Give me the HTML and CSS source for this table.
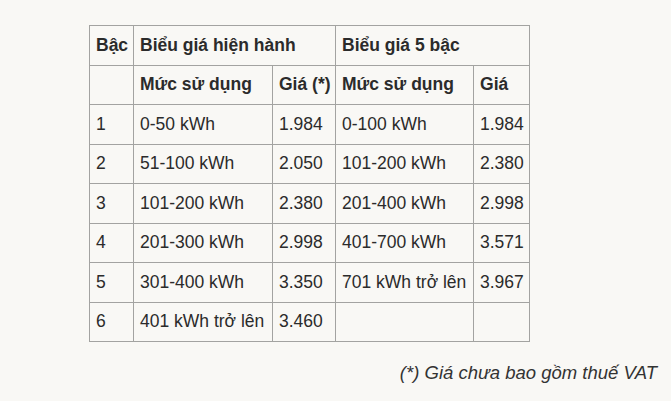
FILE: index.html
```html
<!DOCTYPE html>
<html lang="vi">
<head>
<meta charset="utf-8">
<link rel="stylesheet" href="styles.css">
</head>
<body>
<div class="page">
  <table class="price">
    <colgroup>
      <col class="c1"><col class="c2"><col class="c3"><col class="c4"><col class="c5">
    </colgroup>
    <tr class="head">
      <th>Bậc</th>
      <th colspan="2">Biểu giá hiện hành</th>
      <th colspan="2">Biểu giá 5 bậc</th>
    </tr>
    <tr class="head">
      <th></th>
      <th>Mức sử dụng</th>
      <th>Giá (*)</th>
      <th>Mức sử dụng</th>
      <th>Giá</th>
    </tr>
    <tr><td>1</td><td>0-50 kWh</td><td>1.984</td><td>0-100 kWh</td><td>1.984</td></tr>
    <tr><td>2</td><td>51-100 kWh</td><td>2.050</td><td>101-200 kWh</td><td>2.380</td></tr>
    <tr><td>3</td><td>101-200 kWh</td><td>2.380</td><td>201-400 kWh</td><td>2.998</td></tr>
    <tr><td>4</td><td>201-300 kWh</td><td>2.998</td><td>401-700 kWh</td><td>3.571</td></tr>
    <tr><td>5</td><td>301-400 kWh</td><td>3.350</td><td>701 kWh trở lên</td><td>3.967</td></tr>
    <tr><td>6</td><td>401 kWh trở lên</td><td>3.460</td><td></td><td></td></tr>
  </table>
  <p class="note">(*) Giá chưa bao gồm thuế VAT</p>
</div>
</body>
</html>
```
FILE: styles.css
```css
html, body {
  margin: 0;
  padding: 0;
  background: #f9f8f5;
}
body {
  width: 671px;
  height: 401px;
  overflow: hidden;
  font-family: "Liberation Sans", Arial, sans-serif;
  color: #2b2b2b;
}
.page {
  padding-top: 25px;
}
.price {
  margin-left: 89px;
  border-collapse: collapse;
  table-layout: fixed;
  width: 441px;
  font-size: 17.5px;
}
.c1 { width: 44px; }
.c2 { width: 139px; }
.c3 { width: 63px; }
.c4 { width: 138px; }
.c5 { width: 56px; }
.price th, .price td {
  border: 1px solid #a3a3a1;
  height: 39.5px;
  padding: 0 0 0 6px;
  text-align: left;
  vertical-align: middle;
  white-space: nowrap;
  box-sizing: border-box;
}
.price th {
  font-weight: bold;
}
.note {
  margin: 20px 14px 0 0;
  line-height: 21px;
  text-align: right;
  font-style: italic;
  font-size: 18.5px;
  color: #333;
}
```
